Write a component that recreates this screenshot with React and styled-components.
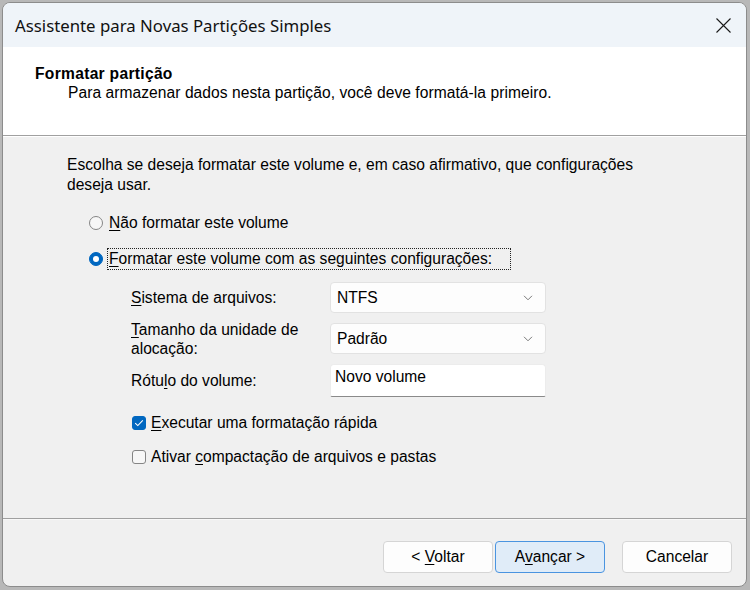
import React from 'react';
import styled, { createGlobalStyle } from 'styled-components';

const Global = createGlobalStyle`
  html, body { margin: 0; padding: 0; }
  body {
    background: #b8b8b8;
    width: 750px;
    height: 590px;
    overflow: hidden;
    font-family: "Liberation Sans", Arial, sans-serif;
    color: #000;
  }
`;

const Frame = styled.div`
  width: 750px;
  height: 590px;
  box-sizing: border-box;
  padding: 2px 3px 3px 2px;
  display: flex;
`;

const Dialog = styled.div`
  flex: 1;
  display: flex;
  flex-direction: column;
  background: #f0f0f0;
  border: 1px solid #8c8c8c;
  border-radius: 8px;
  overflow: hidden;
`;

const TitleBar = styled.div`
  height: 44px;
  flex: none;
  display: flex;
  align-items: center;
  background: #eff4f9;
`;

const TitleText = styled.div`
  flex: 1;
  padding-left: 12px;
  font-family: "Segoe UI", "Noto Sans", sans-serif;
  font-size: 16.8px;
  color: #111;
`;

const CloseBtn = styled.div`
  width: 46px;
  height: 44px;
  display: flex;
  align-items: center;
  justify-content: center;
`;

const Header = styled.div`
  flex: none;
  height: 89px;
  box-sizing: border-box;
  background: #fff;
  border-bottom: 1px solid #a0a0a0;
  box-shadow: 0 1px 0 #ffffff;
  padding: 17px 0 0 32px;
  font-size: 15.6px;
  line-height: 19px;
`;

const HeaderTitle = styled.div`
  font-weight: bold;
  letter-spacing: 0.3px;
`;

const HeaderSub = styled.div`
  margin-left: 33px;
  letter-spacing: 0.05px;
`;

const Body = styled.div`
  flex: 1;
  display: flex;
  flex-direction: column;
  padding: 19px 0 0 64px;
  font-size: 15.6px;
`;

const Intro = styled.p`
  margin: 0;
  width: 598px;
  line-height: 19.5px;
`;

const RadioGroup = styled.div`
  display: flex;
  flex-direction: column;
  gap: 14px;
  margin: 18px 0 0 22px;
`;

const RadioRow = styled.div`
  height: 22px;
  display: flex;
  align-items: center;
  gap: 4px;
`;

const RadioCircle = styled.span`
  width: 14px;
  height: 14px;
  box-sizing: border-box;
  border-radius: 50%;
  flex: none;
  display: flex;
  align-items: center;
  justify-content: center;
  background: ${p => (p.$on ? '#0067c0' : '#f7f7f7')};
  border: 1px solid ${p => (p.$on ? '#0067c0' : '#858585')};
  &::after {
    content: '';
    display: ${p => (p.$on ? 'block' : 'none')};
    width: 6px;
    height: 6px;
    border-radius: 50%;
    background: #fff;
  }
`;

const RadioLabel = styled.span`
  box-sizing: border-box;
  height: 22px;
  display: flex;
  align-items: center;
  padding-left: 1px;
  border: 1px dotted ${p => (p.$focus ? '#222' : 'transparent')};
  width: ${p => (p.$focus ? '404px' : 'auto')};
`;

const Acc = styled.span`
  text-decoration: underline;
  text-underline-offset: 2px;
  text-decoration-thickness: 1px;
`;

const FormGrid = styled.div`
  display: grid;
  grid-template-columns: 199px 216px;
  grid-template-rows: 31px 31px 33px;
  row-gap: 10px;
  align-items: center;
  margin: 12px 0 0 64px;
`;

const FieldLabel = styled.div`
  line-height: 19px;
  width: 190px;
  margin: ${p => (p.$tall ? '-4px 0' : '0')};
`;

const Combo = styled.div`
  height: 31px;
  box-sizing: border-box;
  display: flex;
  align-items: center;
  justify-content: space-between;
  padding: 0 12px 0 6px;
  background: #fdfdfd;
  border: 1px solid #e2e2e2;
  border-radius: 4px;
`;

const TextBox = styled.div`
  height: 33px;
  box-sizing: border-box;
  padding: 2px 0 0 4px;
  line-height: 19px;
  background: #ffffff;
  border: 1px solid #ececec;
  border-bottom: 1px solid #8a8a8a;
  border-radius: 4px 4px 2px 2px;
`;

const CheckGroup = styled.div`
  display: flex;
  flex-direction: column;
  gap: 14px;
  margin: 16px 0 0 65px;
`;

const CheckRow = styled.div`
  height: 20px;
  display: flex;
  align-items: center;
  gap: 5px;
`;

const CheckBox = styled.span`
  width: 14px;
  height: 14px;
  box-sizing: border-box;
  flex: none;
  border-radius: 3px;
  display: flex;
  align-items: center;
  justify-content: center;
  background: ${p => (p.$on ? '#0067c0' : '#f7f7f7')};
  border: 1px solid ${p => (p.$on ? '#0067c0' : '#858585')};
`;

const Footer = styled.div`
  flex: none;
  height: 68px;
  box-sizing: border-box;
  border-top: 1px solid #a0a0a0;
  box-shadow: inset 0 1px 0 #f8f8f8;
  display: flex;
  justify-content: flex-end;
  align-items: flex-start;
  padding: 22px 14px 0 0;
`;

const Button = styled.div`
  width: 110px;
  height: 32px;
  box-sizing: border-box;
  display: flex;
  align-items: center;
  justify-content: center;
  font-size: 15.6px;
  border-radius: 4px;
  margin-left: ${p => p.$gap || 0}px;
  background: ${p => (p.$primary ? '#e0ecf8' : '#fdfdfd')};
  border: 1px solid ${p => (p.$primary ? '#4a94e0' : '#d5d5d5')};
`;

const Chevron = () => (
  <svg width="10" height="6" viewBox="0 0 10 6">
    <path d="M1 0.8 L5 4.8 L9 0.8" fill="none" stroke="#7a7a7a" strokeWidth="1" />
  </svg>
);

export default function App() {
  return (
    <>
      <Global />
      <Frame>
        <Dialog>
          <TitleBar>
            <TitleText>Assistente para Novas Partições Simples</TitleText>
            <CloseBtn>
              <svg width="15" height="15" viewBox="0 0 15 15">
                <path d="M0.5 0.5 L14.5 14.5 M14.5 0.5 L0.5 14.5" stroke="#1a1a1a" strokeWidth="1.1" />
              </svg>
            </CloseBtn>
          </TitleBar>
          <Header>
            <HeaderTitle>Formatar partição</HeaderTitle>
            <HeaderSub>Para armazenar dados nesta partição, você deve formatá-la primeiro.</HeaderSub>
          </Header>
          <Body>
            <Intro>
              Escolha se deseja formatar este volume e, em caso afirmativo, que configurações deseja usar.
            </Intro>
            <RadioGroup>
              <RadioRow>
                <RadioCircle />
                <RadioLabel>
                  <span><Acc>N</Acc>ão formatar este volume</span>
                </RadioLabel>
              </RadioRow>
              <RadioRow>
                <RadioCircle $on />
                <RadioLabel $focus>
                  <span><Acc>F</Acc>ormatar este volume com as seguintes configurações:</span>
                </RadioLabel>
              </RadioRow>
            </RadioGroup>
            <FormGrid>
              <FieldLabel><Acc>S</Acc>istema de arquivos:</FieldLabel>
              <Combo>
                <span>NTFS</span>
                <Chevron />
              </Combo>
              <FieldLabel $tall><Acc>T</Acc>amanho da unidade de<br />alocação:</FieldLabel>
              <Combo>
                <span>Padrão</span>
                <Chevron />
              </Combo>
              <FieldLabel>Rótu<Acc>l</Acc>o do volume:</FieldLabel>
              <TextBox>Novo volume</TextBox>
            </FormGrid>
            <CheckGroup>
              <CheckRow>
                <CheckBox $on>
                  <svg width="10" height="8" viewBox="0 0 10 8">
                    <path d="M1.2 4.2 L3.8 6.6 L8.8 1.4" fill="none" stroke="#ffffff" strokeWidth="1.1" />
                  </svg>
                </CheckBox>
                <span><Acc>E</Acc>xecutar uma formatação rápida</span>
              </CheckRow>
              <CheckRow>
                <CheckBox />
                <span>Ativar <Acc>c</Acc>ompactação de arquivos e pastas</span>
              </CheckRow>
            </CheckGroup>
          </Body>
          <Footer>
            <Button><span>&lt; <Acc>V</Acc>oltar</span></Button>
            <Button $primary $gap={2}><span>A<Acc>v</Acc>ançar &gt;</span></Button>
            <Button $gap={17}><span>Cancelar</span></Button>
          </Footer>
        </Dialog>
      </Frame>
    </>
  );
}
